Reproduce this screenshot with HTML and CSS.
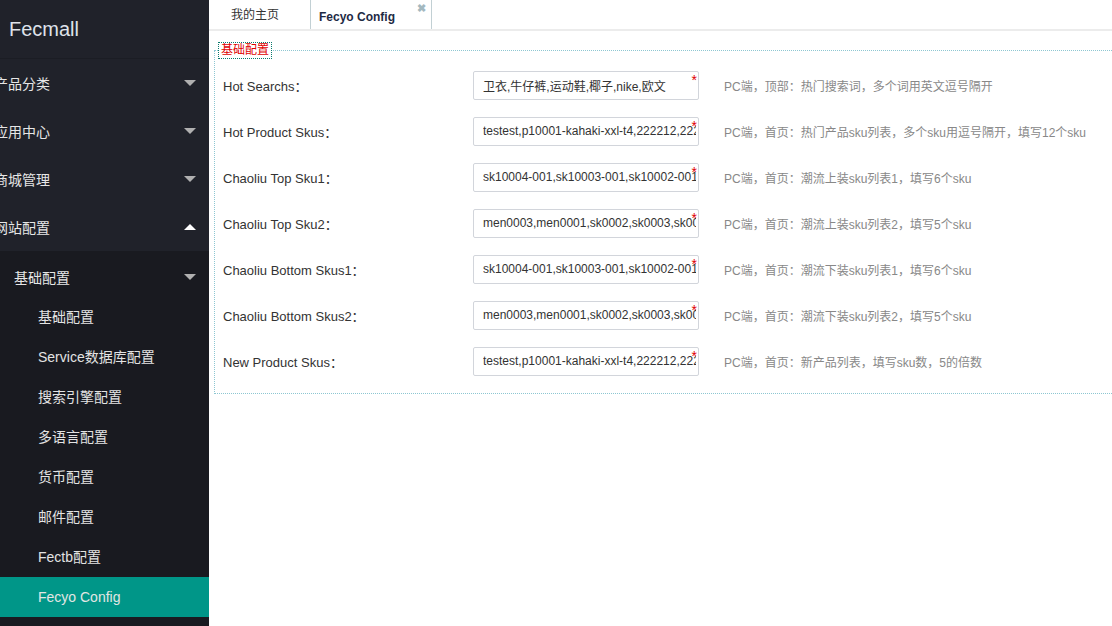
FILE: index.html
```html
<!DOCTYPE html>
<html>
<head>
<meta charset="utf-8">
<link rel="stylesheet" href="styles.css">
</head>
<body>
<div class="app">
  <aside class="sidebar">
    <div class="logo">Fecmall</div>
    <ul class="menu">
      <li class="menu-item"><span class="menu-text">产品分类</span><i class="arrow down"></i></li>
      <li class="menu-item"><span class="menu-text">应用中心</span><i class="arrow down"></i></li>
      <li class="menu-item"><span class="menu-text">商城管理</span><i class="arrow down"></i></li>
      <li class="menu-item"><span class="menu-text">网站配置</span><i class="arrow up"></i></li>
    </ul>
    <div class="submenu">
      <div class="sub-head"><span>基础配置</span><i class="arrow down"></i></div>
      <ul class="sub-list">
        <li class="sub-item">基础配置</li>
        <li class="sub-item">Service数据库配置</li>
        <li class="sub-item">搜索引擎配置</li>
        <li class="sub-item">多语言配置</li>
        <li class="sub-item">货币配置</li>
        <li class="sub-item">邮件配置</li>
        <li class="sub-item">Fectb配置</li>
        <li class="sub-item active">Fecyo Config</li>
      </ul>
    </div>
  </aside>
  <main class="main">
    <div class="tabs">
      <div class="tab tab-home">我的主页</div>
      <div class="tab tab-current">Fecyo Config<span class="tab-close">✖</span></div>
    </div>
    <div class="content">
      <fieldset class="panel">
        <legend class="panel-title">基础配置</legend>
        <div class="row">
          <label class="label">Hot Searchs：</label>
          <div class="field"><input class="input" value="卫衣,牛仔裤,运动鞋,椰子,nike,欧文"><span class="req">*</span></div>
          <span class="hint">PC端，顶部：热门搜索词，多个词用英文逗号隔开</span>
        </div>
        <div class="row">
          <label class="label">Hot Product Skus：</label>
          <div class="field"><input class="input" value="testest,p10001-kahaki-xxl-t4,222212,22222"><span class="req">*</span></div>
          <span class="hint">PC端，首页：热门产品sku列表，多个sku用逗号隔开，填写12个sku</span>
        </div>
        <div class="row">
          <label class="label">Chaoliu Top Sku1：</label>
          <div class="field"><input class="input" value="sk10004-001,sk10003-001,sk10002-001,sk10001-001"><span class="req">*</span></div>
          <span class="hint">PC端，首页：潮流上装sku列表1，填写6个sku</span>
        </div>
        <div class="row">
          <label class="label">Chaoliu Top Sku2：</label>
          <div class="field"><input class="input" value="men0003,men0001,sk0002,sk0003,sk0001"><span class="req">*</span></div>
          <span class="hint">PC端，首页：潮流上装sku列表2，填写5个sku</span>
        </div>
        <div class="row">
          <label class="label">Chaoliu Bottom Skus1：</label>
          <div class="field"><input class="input" value="sk10004-001,sk10003-001,sk10002-001,sk10001-001"><span class="req">*</span></div>
          <span class="hint">PC端，首页：潮流下装sku列表1，填写6个sku</span>
        </div>
        <div class="row">
          <label class="label">Chaoliu Bottom Skus2：</label>
          <div class="field"><input class="input" value="men0003,men0001,sk0002,sk0003,sk0001"><span class="req">*</span></div>
          <span class="hint">PC端，首页：潮流下装sku列表2，填写5个sku</span>
        </div>
        <div class="row">
          <label class="label">New Product Skus：</label>
          <div class="field"><input class="input" value="testest,p10001-kahaki-xxl-t4,222212,22222"><span class="req">*</span></div>
          <span class="hint">PC端，首页：新产品列表，填写sku数，5的倍数</span>
        </div>
      </fieldset>
    </div>
  </main>
</div>
</body>
</html>
```

FILE: styles.css
```css
* { box-sizing: border-box; }
html, body {
  margin: 0;
  padding: 0;
  height: 100%;
  overflow: hidden;
  background: #fff;
  font-family: "Liberation Sans", Arial, "Noto Sans CJK SC", sans-serif;
}
ul { list-style: none; margin: 0; padding: 0; }

.app {
  display: flex;
  height: 626px;
}

/* Sidebar */
.sidebar {
  width: 209px;
  flex: none;
  background: #20222a;
  color: #e8e8e8;
  display: flex;
  flex-direction: column;
  overflow: hidden;
}
.logo {
  height: 59px;
  line-height: 59px;
  padding-left: 9px;
  font-size: 20px;
  color: #dfe3ea;
  border-bottom: 1px solid #1b1d24;
}
.menu-item {
  height: 48px;
  display: flex;
  align-items: center;
  justify-content: space-between;
  padding-right: 13px;
  font-size: 14px;
}
.menu-text {
  margin-left: -6px;
  color: #e6e6e6;
}
.arrow {
  width: 0;
  height: 0;
  border-left: 6px solid transparent;
  border-right: 6px solid transparent;
}
.arrow.down {
  border-top: 6px solid #b0b0b0;
}
.arrow.up {
  border-bottom: 6px solid #ffffff;
}
.submenu {
  background: #191a20;
  flex: 1;
}
.sub-head {
  height: 46px;
  display: flex;
  align-items: center;
  justify-content: space-between;
  padding: 5px 13px 0 14px;
  font-size: 14px;
  color: #e6e6e6;
}
.sub-item {
  height: 40px;
  line-height: 40px;
  padding-left: 38px;
  font-size: 14px;
  color: #e3e3e3;
}
.sub-item.active {
  background: #009688;
  color: #e2e6e4;
}

/* Main */
.main {
  flex: 1;
  min-width: 0;
  overflow: hidden;
  display: flex;
  flex-direction: column;
}
.tabs {
  height: 31px;
  flex: none;
  display: flex;
  border-bottom: 2px solid #ececec;
}
.tab {
  height: 29px;
  font-size: 12px;
  color: #333;
  border-right: 1px solid #c2d0d4;
  position: relative;
}
.tab-home {
  width: 102px;
  padding-left: 22px;
  line-height: 30px;
}
.tab-current {
  width: 121px;
  padding-left: 8px;
  line-height: 34px;
  font-weight: bold;
  color: #1e2a44;
}
.tab-close {
  position: absolute;
  top: -9px;
  right: 5px;
  font-size: 11px;
  font-weight: bold;
  color: #a3b8bf;
}

.content {
  padding: 11px 0 0 5px;
}
.panel {
  width: 1000px;
  margin: 0;
  padding: 3px 0 9px 8px;
  border: 1px dotted #8ec7d2;
}
.panel-title {
  margin-left: -5px;
  padding: 0 2px;
  font-size: 12px;
  line-height: 15px;
  color: #e00000;
  border: 1px dotted #0a7a6e;
}
.row {
  height: 46px;
  display: flex;
  align-items: center;
}
.label {
  width: 250px;
  flex: none;
  font-size: 13px;
  color: #333;
}
.field {
  position: relative;
  width: 226px;
  flex: none;
}
.input {
  display: block;
  width: 226px;
  height: 29px;
  margin: 0;
  padding: 0 2px 0 9px;
  border: 1px solid #d2d5db;
  border-radius: 2px;
  font-family: "Liberation Sans", Arial, "Noto Sans CJK SC", sans-serif;
  font-size: 12px;
  color: #333;
  background: #fff;
  outline: none;
}
.req {
  position: absolute;
  top: 2px;
  right: 2px;
  font-size: 14px;
  line-height: 14px;
  color: #e00000;
}
.hint {
  margin-left: 25px;
  font-size: 12px;
  color: #888;
  white-space: nowrap;
}
```
